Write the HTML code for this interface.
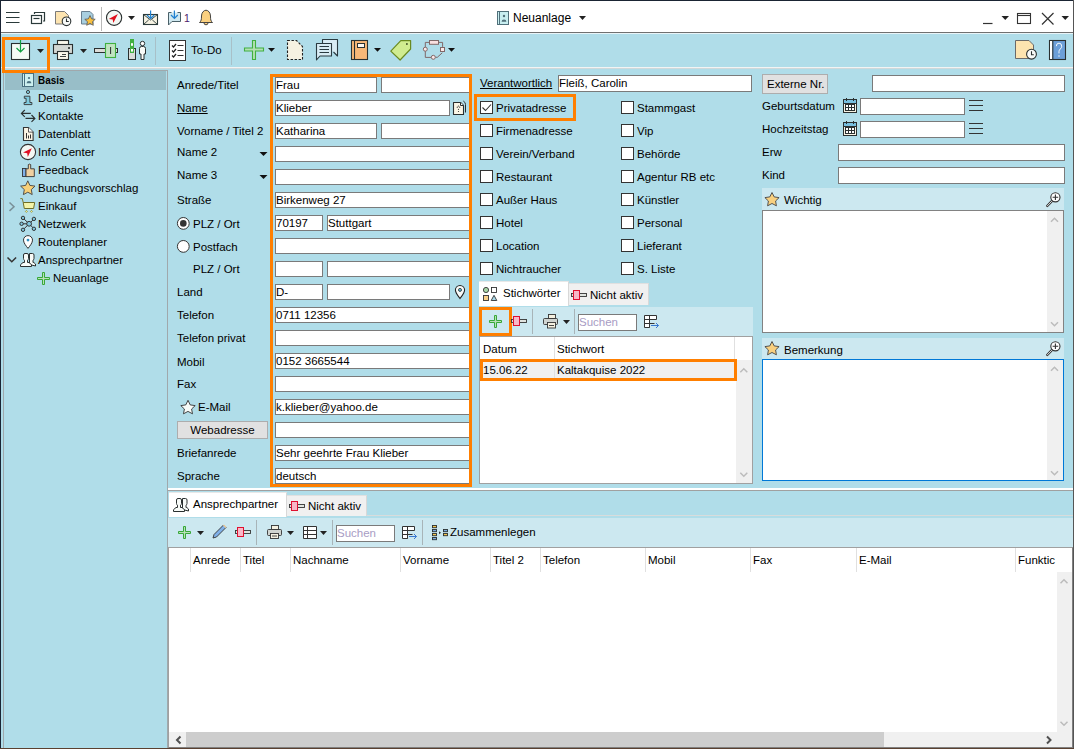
<!DOCTYPE html>
<html><head><meta charset="utf-8">
<style>
*{margin:0;padding:0;box-sizing:border-box}
html,body{width:1074px;height:749px;overflow:hidden;background:#b0dde9}
body{position:relative;font-family:"Liberation Sans",sans-serif;font-size:11.5px;color:#000}
.a{position:absolute}
.t{position:absolute;white-space:nowrap;line-height:16px;height:16px}
.in{position:absolute;background:#fff;border:1px solid #7a7a7a;height:16px}
.in span{position:absolute;left:0px;top:-1px;line-height:16px;white-space:nowrap}
.cb{position:absolute;width:13px;height:13px;border:1px solid #333;background:#fff}
svg{position:absolute;overflow:visible}
.u{text-decoration:underline}
</style></head><body>

<!-- window frame -->
<div class="a" style="left:0;top:0;width:1074px;height:32px;background:#fff"></div>
<div class="a" style="left:0;top:0;width:1074px;height:1px;background:#1a2433"></div>
<div class="a" style="left:0;top:0;width:1px;height:749px;background:#1a2433"></div>
<div class="a" style="left:1073px;top:0;width:1px;height:749px;background:#555"></div>
<div class="a" style="left:0;top:748px;width:1074px;height:1px;background:#5a4030"></div>
<div class="a" style="left:1px;top:32px;width:1072px;height:1px;background:#707070"></div>
<div class="a" style="left:1px;top:33px;width:1072px;height:1px;background:#e8f4f8"></div>


<!-- title bar icons -->
<svg style="left:0;top:0" width="1074" height="32">
 <g stroke="#2a3a3a" stroke-width="1.2" fill="none">
  <path d="M6 12.5h13.5M6 17.5h13.5M6 22.5h13.5"/>
  <path d="M34.5 14v-1.5h10v8.5h-1.5"/>
  <rect x="31.5" y="15.5" width="10" height="8"/>
  <path d="M33.5 18.5h6"/>
 </g>
 <!-- note clock -->
 <path d="M55.5 11.5h9l4 4v8.5h-13z" fill="#fde4b0" stroke="#7a7a7a"/>
 <circle cx="66.5" cy="21.3" r="4.3" fill="#f8faf8" stroke="#2a3030" stroke-width="1.1"/>
 <path d="M66.5 18.6v2.9h2.3" stroke="#2a3030" fill="none" stroke-width="1.1"/>
 <!-- star note -->
 <path d="M81.5 11.5h8.5l3 3v9.5h-11.5z" fill="#a8cfe0" stroke="#6a8090"/>
 <path d="M90 15.5l1.6 3.4 3.6.4-2.7 2.4.8 3.6-3.3-1.9-3.3 1.9.8-3.6-2.7-2.4 3.6-.4z" fill="#f8c040" stroke="#555" stroke-width=".8"/>
 <path d="M101.5 7v24" stroke="#b8b8b8"/>
 <!-- compass -->
 <circle cx="114.1" cy="17.8" r="7.6" fill="#f4f8f4" stroke="#2a3030" stroke-width="1.1"/>
 <path d="M117.9 14l-9.2 5.1 4 .4.6 3.4z" fill="#e0101c"/>
 <path d="M128 16h7l-3.5 4z" fill="#222"/>
 <!-- mail -->
 <rect x="143.5" y="14.5" width="14" height="10" fill="#f8f4e4" stroke="#2a3a3a" stroke-width="1.1"/>
 <path d="M143.5 14.5l7 5.5 7-5.5M143.5 24.5l5.2-4.6M157.5 24.5l-5.2-4.6" stroke="#2a3a3a" fill="none" stroke-width=".9"/>
 <path d="M150.6 10.5v8M147 15l3.6 3.6 3.6-3.6" stroke="#2080d0" fill="none" stroke-width="1.2"/>
 <!-- chat -->
 <path d="M171.5 12.5h-3v12.5l3.5-3.5h8.5v-9h-3" fill="#d0e8f0" stroke="#4a6068" stroke-width="1"/>
 <rect x="171.5" y="13" width="6" height="2" fill="#d0e8f0"/>
 <path d="M174.4 10.5v8M171 15l3.4 3.4 3.4-3.4" stroke="#2080d0" fill="none" stroke-width="1.2"/>
 <!-- bell -->
 <path d="M199.5 22.5c1.8-1.5 2-3 2-6.5 0-3.4 2.4-5.8 4.5-5.8s4.5 2.4 4.5 5.8c0 3.5.2 5 2 6.5z" fill="#fad080" stroke="#333" stroke-width=".9" stroke-linejoin="round"/>
 <path d="M204 23a2 1.8 0 0 0 4 0" fill="#fad080" stroke="#333" stroke-width=".9"/>
 <!-- window buttons -->
 <path d="M983 23.5h9.5" stroke="#333" stroke-width="1.2"/>
 <path d="M1001.5 16h7.5l-3.75 4z" fill="#222"/>
 <rect x="1017.5" y="13.5" width="13" height="10" fill="none" stroke="#333" stroke-width="1.1"/>
 <path d="M1018 15.5h12" stroke="#333" stroke-width="1.1"/>
 <path d="M1042 13l11.5 11.5M1053.5 13l-11.5 11.5" stroke="#333" stroke-width="1.2"/>
 <path d="M1061.5 16h7.5l-3.75 4z" fill="#222"/>
 <!-- title icon -->
 <rect x="497.5" y="11.5" width="11" height="13" fill="#c8eef0" stroke="#50707a"/>
 <path d="M499.5 11.5v13" stroke="#50707a"/>
 <circle cx="504" cy="16" r="1.2" fill="#50707a"/>
 <path d="M501.6 21.8a2.4 2.3 0 0 1 4.8 0z" fill="#50707a"/>
 <path d="M579 16h7l-3.5 4z" fill="#222"/>
</svg>
<span class="t" style="left:184px;top:10px;color:#4a1a6a;font-size:10.5px">1</span>
<span class="t" style="left:513px;top:10px;font-size:12px">Neuanlage</span>

<!-- toolbar -->
<div class="a" style="left:1px;top:67px;width:1072px;height:1px;background:#f2f4f4"></div>
<div class="a" style="left:1px;top:68px;width:1072px;height:1px;background:#d0d8da"></div>


<svg style="left:0;top:34px" width="1074" height="34">
 <!-- save icon: y offset 34 -->
 <rect x="11.5" y="9.5" width="18" height="16" fill="#f6fbf6" stroke="#2a2f2f" stroke-width="1.1"/>
 <path d="M20.5 6v12M16.5 14l4 4 4-4" stroke="#10a040" fill="none" stroke-width="1.2"/>
 <path d="M37 15h7l-3.5 4z" fill="#222"/>
 <!-- printer -->
 <rect x="57.5" y="6.5" width="11" height="5" fill="#faf8ec" stroke="#2a3030" stroke-width="1.1"/>
 <rect x="53.5" y="10.5" width="19" height="9" fill="#d4d8d4" stroke="#2a3030" stroke-width="1.1"/>
 <rect x="57.5" y="17.5" width="11" height="8" fill="#faf8ec" stroke="#2a3030" stroke-width="1.1"/>
 <circle cx="69" cy="14" r="1" fill="#1a2020"/>
 <path d="M62 20.5h4M60 22.5h6" stroke="#2a3030" stroke-width=".9"/>
 <path d="M80 15h7l-3.5 4z" fill="#222"/>
 <!-- plug -->
 <rect x="94.5" y="14.5" width="23" height="4" fill="#dcdcd8" stroke="#2a3030" stroke-width="1"/>
 <rect x="105.5" y="9.5" width="10" height="14" fill="#c0e4c0" stroke="#40b040" stroke-width="1.1"/>
 <path d="M110.6 13v7" stroke="#2a3030" stroke-width="1"/>
 <!-- person -->
 <rect x="128.5" y="14.5" width="7" height="11" fill="#d8dcd8" stroke="#2a3030" stroke-width="1"/>
 <rect x="130" y="5" width="4" height="14" fill="#40b040"/>
 <rect x="131" y="9.2" width="2" height="2.6" fill="#fff"/>
 <rect x="131" y="15" width="2" height="2.6" fill="#fff"/>
 <circle cx="142.5" cy="9.5" r="2.2" fill="#fff" stroke="#2a3030" stroke-width="1"/>
 <path d="M141 25.5v-5.5h-1.5v-5.5q0-2 2-2h2q2 0 2 2v5.5h-1.5v5.5z" fill="#f8fbf8" stroke="#2a3030" stroke-width="1" stroke-linejoin="round"/>
 <path d="M155.5 3v28" stroke="#a8c0c8"/>
 <!-- todo -->
 <rect x="169.5" y="6.5" width="16" height="20" fill="#fff" stroke="#333"/>
 <path d="M172 11.5l1.5 1.5 2.5-3M172 16.5l1.5 1.5 2.5-3M172 21.5l1.5 1.5 2.5-3" stroke="#222" fill="none" stroke-width="1.2"/>
 <path d="M177.5 11.5h6M177.5 16.5h6M177.5 21.5h6" stroke="#333"/>
 <path d="M231.5 3v28" stroke="#a8c0c8"/>
 <!-- plus -->
 <path d="M252.5 6.5h3v7.5h8v3h-8v8.5h-3v-8.5h-8v-3h8z" fill="#b4e0b4" stroke="#40b040" stroke-width="1.1"/>
 <path d="M268 14h7l-3.5 3.8z" fill="#111"/>
 <!-- dashed doc -->
 <path d="M287.5 6.5h9l6 6v13h-15z" fill="#f6f2e2" stroke="#222" stroke-width="1.1" stroke-dasharray="2.4 1.6"/>
 <!-- chat -->
 <path d="M322.5 9.5v-4h15v16.5l-4-4" fill="#d8ecf4" stroke="#2a3a40" stroke-width="1.1" stroke-linejoin="round"/>
 <path d="M316.5 9.5h15v12.5h-11.5l-3.5 3.8z" fill="#d8ecf4" stroke="#2a3a40" stroke-width="1.1" stroke-linejoin="round"/>
 <path d="M319.5 12.5h9.5M319.5 15.5h9.5M319.5 18.5h9.5" stroke="#2a3a40" stroke-width="1.1"/>
 <!-- book -->
 <rect x="351.5" y="6.5" width="16" height="19" fill="#f8b878" stroke="#2a3030" stroke-width="1.1"/>
 <path d="M354.5 6.5v19" stroke="#2a3030" stroke-width="1.1"/>
 <rect x="357.5" y="9.5" width="7" height="4" fill="#fff8f0" stroke="#2a3030" stroke-width="1"/>
 <path d="M374 14h7l-3.5 3.8z" fill="#111"/>
 <!-- tag -->
 <path d="M390.8 17.1l10-10.5h9.8v8.4l-10.5 11z" fill="#d0ec90" stroke="#6a8a20" stroke-width="1.2" stroke-linejoin="round"/>
 <circle cx="406.9" cy="10" r=".9" fill="#3a4a20"/>
 <!-- workflow -->
 <path d="M429.6 8.4h-4.3v15h6M435.3 23.3h2l5-4.5M438.7 8.4h3.9v4.5" stroke="#806868" fill="none" stroke-width="1"/>
 <rect x="429.5" y="6.5" width="9" height="3.8" fill="#fae0e0" stroke="#806868" stroke-width="1"/>
 <circle cx="425.3" cy="15.2" r="2" fill="#fae8e8" stroke="#806868" stroke-width="1"/>
 <rect x="440.5" y="13.5" width="4" height="4" fill="#fae8e8" stroke="#806868" stroke-width="1"/>
 <circle cx="433.3" cy="23.3" r="2" fill="#fae8e8" stroke="#806868" stroke-width="1"/>
 <path d="M448 14h7l-3.5 3.8z" fill="#111"/>
 <!-- right icons -->
 <path d="M1015.5 6.5h13.5l4.5 4.5v13.5h-18z" fill="#fde4b0" stroke="#6a6a6a" stroke-width="1"/>
 <circle cx="1031.5" cy="20.2" r="4.9" fill="#f8faf8" stroke="#2a3030" stroke-width="1.1"/>
 <path d="M1031.5 17.2v3.5h2.3" stroke="#2a3030" fill="none" stroke-width="1.1"/>
 <rect x="1049.5" y="6.5" width="16" height="19" fill="#6c9fd8" stroke="#2a3030" stroke-width="1.1"/>
 <rect x="1050" y="7" width="2.4" height="18" fill="#fff"/>
 <path d="M1052.8 6.5v19" stroke="#2a3030" stroke-width="1.1"/>
 <path d="M1056.3 12.2q0-3 2.7-3t2.7 3q0 1.6-1.4 2.8q-1.3 1-1.3 2.6v1.8" stroke="#fff" fill="none" stroke-width=".9"/>
 <circle cx="1059" cy="22" r=".7" fill="#fff"/>
</svg>
<span class="t" style="left:191px;top:42px">To-Do</span>
<!-- orange toolbar highlight -->


<!-- nav panel -->
<div class="a" style="left:3px;top:70px;width:165px;height:678px;border-left:1px solid #a0a8ac;border-top:1px solid #a0a8ac;border-right:1px solid #a0a8ac"></div>

<div class="a" style="left:5px;top:71px;width:161px;height:19px;background:#98bec8"></div>
<span class="t" style="left:38px;top:72px;font-weight:bold;transform:scaleX(.86);transform-origin:0 0">Basis</span>
<span class="t" style="left:38px;top:90px">Details</span>
<span class="t" style="left:38px;top:108px">Kontakte</span>
<span class="t" style="left:38px;top:126px">Datenblatt</span>
<span class="t" style="left:38px;top:144px">Info Center</span>
<span class="t" style="left:38px;top:162px">Feedback</span>
<span class="t" style="left:38px;top:180px">Buchungsvorschlag</span>
<span class="t" style="left:38px;top:198px">Einkauf</span>
<span class="t" style="left:38px;top:216px">Netzwerk</span>
<span class="t" style="left:38px;top:234px">Routenplaner</span>
<span class="t" style="left:38px;top:252px">Ansprechpartner</span>
<span class="t" style="left:53px;top:270px">Neuanlage</span>
<span class="t" style="left:177px;top:77px">Anrede/Titel</span>
<span class="t" style="left:177px;top:100px"><span class=u>Name</span></span>
<span class="t" style="left:177px;top:123px">Vorname / Titel 2</span>
<span class="t" style="left:177px;top:144px">Name 2</span>
<span class="t" style="left:177px;top:167px">Name 3</span>
<span class="t" style="left:177px;top:192px">Straße</span>
<span class="t" style="left:177px;top:284px">Land</span>
<span class="t" style="left:177px;top:307px">Telefon</span>
<span class="t" style="left:177px;top:330px">Telefon privat</span>
<span class="t" style="left:177px;top:354px">Mobil</span>
<span class="t" style="left:177px;top:376px">Fax</span>
<span class="t" style="left:177px;top:445px">Briefanrede</span>
<span class="t" style="left:177px;top:468px">Sprache</span>
<span class="t" style="left:193px;top:216px">PLZ / Ort</span>
<span class="t" style="left:193px;top:239px">Postfach</span>
<span class="t" style="left:193px;top:261px">PLZ / Ort</span>
<span class="t" style="left:198px;top:399px">E-Mail</span>
<div class="a" style="left:177px;top:421px;width:91px;height:18px;background:#e1e1e1;border:1px solid #adadad"></div>
<span class="t" style="left:177px;top:422px;width:91px;text-align:center">Webadresse</span>
<div class="in" style="left:275px;top:77px;width:102px"><span>Frau</span></div>
<div class="in" style="left:381px;top:77px;width:89px"></div>
<div class="in" style="left:275px;top:100px;width:175px"><span>Klieber</span></div>
<div class="in" style="left:275px;top:123px;width:102px"><span>Katharina</span></div>
<div class="in" style="left:381px;top:123px;width:89px"></div>
<div class="in" style="left:275px;top:146px;width:195px"></div>
<div class="in" style="left:275px;top:169px;width:195px"></div>
<div class="in" style="left:275px;top:192px;width:195px"><span>Birkenweg 27</span></div>
<div class="in" style="left:275px;top:215px;width:48px"><span>70197</span></div>
<div class="in" style="left:327px;top:215px;width:143px"><span>Stuttgart</span></div>
<div class="in" style="left:275px;top:238px;width:195px"></div>
<div class="in" style="left:275px;top:261px;width:48px"></div>
<div class="in" style="left:327px;top:261px;width:143px"></div>
<div class="in" style="left:275px;top:284px;width:48px"><span>D-</span></div>
<div class="in" style="left:327px;top:284px;width:123px"></div>
<div class="in" style="left:275px;top:307px;width:195px"><span>0711 12356</span></div>
<div class="in" style="left:275px;top:330px;width:195px"></div>
<div class="in" style="left:275px;top:353px;width:195px"><span>0152 3665544</span></div>
<div class="in" style="left:275px;top:376px;width:195px"></div>
<div class="in" style="left:275px;top:399px;width:195px"><span>k.klieber@yahoo.de</span></div>
<div class="in" style="left:275px;top:422px;width:195px"></div>
<div class="in" style="left:275px;top:445px;width:195px"><span>Sehr geehrte Frau Klieber</span></div>
<div class="in" style="left:275px;top:468px;width:195px"><span>deutsch</span></div>
<div class="a" style="left:270px;top:74px;width:202px;height:413px;border:3px solid #ff7f00"></div>
<span class="t u" style="left:480px;top:75px">Verantwortlich</span>
<div class="in" style="left:558px;top:75px;width:194px;height:17px"><span>Fleiß, Carolin</span></div>
<div class="cb" style="left:480px;top:101px"></div><span class="t" style="left:496px;top:100px">Privatadresse</span>
<div class="cb" style="left:621px;top:101px"></div><span class="t" style="left:637px;top:100px">Stammgast</span>
<div class="cb" style="left:480px;top:124px"></div><span class="t" style="left:496px;top:123px">Firmenadresse</span>
<div class="cb" style="left:621px;top:124px"></div><span class="t" style="left:637px;top:123px">Vip</span>
<div class="cb" style="left:480px;top:147px"></div><span class="t" style="left:496px;top:146px">Verein/Verband</span>
<div class="cb" style="left:621px;top:147px"></div><span class="t" style="left:637px;top:146px">Behörde</span>
<div class="cb" style="left:480px;top:170px"></div><span class="t" style="left:496px;top:169px">Restaurant</span>
<div class="cb" style="left:621px;top:170px"></div><span class="t" style="left:637px;top:169px">Agentur RB etc</span>
<div class="cb" style="left:480px;top:193px"></div><span class="t" style="left:496px;top:192px">Außer Haus</span>
<div class="cb" style="left:621px;top:193px"></div><span class="t" style="left:637px;top:192px">Künstler</span>
<div class="cb" style="left:480px;top:216px"></div><span class="t" style="left:496px;top:215px">Hotel</span>
<div class="cb" style="left:621px;top:216px"></div><span class="t" style="left:637px;top:215px">Personal</span>
<div class="cb" style="left:480px;top:239px"></div><span class="t" style="left:496px;top:238px">Location</span>
<div class="cb" style="left:621px;top:239px"></div><span class="t" style="left:637px;top:238px">Lieferant</span>
<div class="cb" style="left:480px;top:262px"></div><span class="t" style="left:496px;top:261px">Nichtraucher</span>
<div class="cb" style="left:621px;top:262px"></div><span class="t" style="left:637px;top:261px">S. Liste</span>
<svg style="left:480px;top:101px" width="13" height="13"><path d="M2.5 6.5l3 3 5.5-6" stroke="#333" fill="none" stroke-width="1.1"/></svg>
<div class="a" style="left:474px;top:94px;width:102px;height:27px;border:3px solid #ff7f00"></div>
<div class="a" style="left:762px;top:74px;width:66px;height:20px;background:#e1e1e1;border:1px solid #adadad"></div>
<span class="t" style="left:767px;top:76px">Externe Nr.</span>
<div class="in" style="left:872px;top:75px;width:193px;height:17px"></div>
<span class="t" style="left:762px;top:98px">Geburtsdatum</span>
<div class="in" style="left:860px;top:98px;width:105px;height:17px"></div>
<span class="t" style="left:762px;top:121px">Hochzeitstag</span>
<div class="in" style="left:860px;top:121px;width:105px;height:17px"></div>
<span class="t" style="left:762px;top:144px">Erw</span>
<div class="in" style="left:838px;top:144px;width:227px;height:17px"></div>
<span class="t" style="left:762px;top:167px">Kind</span>
<div class="in" style="left:838px;top:167px;width:227px;height:17px"></div>
<div class="a" style="left:762px;top:188px;width:302px;height:22px;background:#cce8f0"></div>
<span class="t" style="left:784px;top:192px">Wichtig</span>
<div class="a" style="left:762px;top:210px;width:302px;height:123px;background:#fff;border:1px solid #828282"></div>
<div class="a" style="left:1047px;top:211px;width:16px;height:121px;background:#f0f0f0"></div>
<div class="a" style="left:762px;top:338px;width:302px;height:21px;background:#cce8f0"></div>
<span class="t" style="left:784px;top:342px">Bemerkung</span>
<div class="a" style="left:762px;top:359px;width:302px;height:122px;background:#fff;border:1px solid #0078d7"></div>
<div class="a" style="left:1047px;top:360px;width:16px;height:120px;background:#f0f0f0"></div>
<div class="a" style="left:479px;top:281px;width:90px;height:25px;background:#fff;border-top:1px solid #e8e8e8;border-right:1px solid #d8d8d8"></div>
<span class="t" style="left:503px;top:285px">Stichwörter</span>
<div class="a" style="left:569px;top:283px;width:80px;height:22px;background:#f0f0f0;border-top:1px solid #e0e0e0;border-right:1px solid #d8d8d8"></div>
<span class="t" style="left:590px;top:287px">Nicht aktiv</span>
<div class="a" style="left:479px;top:307px;width:274px;height:30px;background:#cce8f0"></div>
<div class="a" style="left:479px;top:336px;width:274px;height:148px;background:#fff;border:1px solid #a0a0a0"></div>
<div class="a" style="left:736px;top:360px;width:16px;height:123px;background:#f0f0f0"></div>
<div class="a" style="left:554px;top:337px;width:1px;height:22px;background:#e0e0e0"></div>
<div class="a" style="left:734px;top:337px;width:1px;height:22px;background:#e0e0e0"></div>
<span class="t" style="left:483px;top:341px">Datum</span>
<span class="t" style="left:557px;top:341px">Stichwort</span>
<div class="a" style="left:480px;top:359px;width:256px;height:22px;background:#f0f0f0;border-bottom:1px solid #808080"></div>
<div class="a" style="left:554px;top:359px;width:1px;height:22px;background:#e0e0e0"></div>
<span class="t" style="left:483px;top:362px">15.06.22</span>
<span class="t" style="left:557px;top:362px">Kaltakquise 2022</span>
<div class="a" style="left:480px;top:359px;width:257px;height:22px;border:3px solid #ff7f00"></div>
<div class="a" style="left:578px;top:314px;width:59px;height:17px;background:#fff;border:1px solid #7a7a7a"></div>
<span class="t" style="left:579px;top:314px;color:#a89cc4">Suchen</span>
<div class="a" style="left:479px;top:307px;width:33px;height:29px;border:3px solid #ff7f00"></div>
<div class="a" style="left:168px;top:488px;width:905px;height:2px;background:#fff"></div>
<div class="a" style="left:168px;top:490px;width:905px;height:1px;background:#a0a0a0"></div>
<div class="a" style="left:367px;top:515px;width:706px;height:1px;background:#d8dcdc"></div><div class="a" style="left:169px;top:492px;width:118px;height:25px;background:#fff;border-top:1px solid #e8e8e8;border-right:1px solid #d8d8d8"></div>
<span class="t" style="left:193px;top:496px">Ansprechpartner</span>
<div class="a" style="left:287px;top:495px;width:80px;height:21px;background:#f0f0f0;border-top:1px solid #e0e0e0;border-right:1px solid #d8d8d8"></div>
<span class="t" style="left:308px;top:498px">Nicht aktiv</span>
<div class="a" style="left:168px;top:518px;width:905px;height:29px;background:#cce8f0"></div>
<div class="a" style="left:168px;top:547px;width:905px;height:201px;background:#fff;border-left:1px solid #a0a0a0;border-top:1px solid #a0a0a0;border-right:1px solid #808080;border-bottom:1px solid #808080"></div>
<div class="a" style="left:336px;top:525px;width:59px;height:17px;background:#fff;border:1px solid #7a7a7a"></div>
<span class="t" style="left:337px;top:525px;color:#a89cc4">Suchen</span>
<span class="t" style="left:450px;top:524px">Zusammenlegen</span>
<div class="a" style="left:190px;top:548px;width:1px;height:24px;background:#e0e0e0"></div>
<span class="t" style="left:193px;top:552px">Anrede</span>
<div class="a" style="left:240px;top:548px;width:1px;height:24px;background:#e0e0e0"></div>
<span class="t" style="left:243px;top:552px">Titel</span>
<div class="a" style="left:290px;top:548px;width:1px;height:24px;background:#e0e0e0"></div>
<span class="t" style="left:293px;top:552px">Nachname</span>
<div class="a" style="left:400px;top:548px;width:1px;height:24px;background:#e0e0e0"></div>
<span class="t" style="left:403px;top:552px">Vorname</span>
<div class="a" style="left:490px;top:548px;width:1px;height:24px;background:#e0e0e0"></div>
<span class="t" style="left:493px;top:552px">Titel 2</span>
<div class="a" style="left:540px;top:548px;width:1px;height:24px;background:#e0e0e0"></div>
<span class="t" style="left:543px;top:552px">Telefon</span>
<div class="a" style="left:645px;top:548px;width:1px;height:24px;background:#e0e0e0"></div>
<span class="t" style="left:648px;top:552px">Mobil</span>
<div class="a" style="left:750px;top:548px;width:1px;height:24px;background:#e0e0e0"></div>
<span class="t" style="left:753px;top:552px">Fax</span>
<div class="a" style="left:856px;top:548px;width:1px;height:24px;background:#e0e0e0"></div>
<span class="t" style="left:859px;top:552px">E-Mail</span>
<div class="a" style="left:1015px;top:548px;width:1px;height:24px;background:#e0e0e0"></div>
<span class="t" style="left:1018px;top:552px;width:38px;overflow:hidden">Funktic</span>
<div class="a" style="left:1057px;top:572px;width:15px;height:160px;background:#f0f0f0"></div>
<div class="a" style="left:169px;top:732px;width:903px;height:15px;background:#f0f0f0"></div>
<div class="a" style="left:186px;top:732px;width:698px;height:15px;background:#cdcdcd"></div>

<svg style="left:0;top:0" width="170" height="300">
 <!-- basis -->
 <rect x="22.5" y="73.5" width="11" height="13" fill="#cdf0f0" stroke="#4a7080"/>
 <path d="M24.5 73.5v13" stroke="#4a7080"/>
 <circle cx="29" cy="78" r="1.1" fill="#4a7080"/>
 <path d="M26.6 83.3a2.4 2.3 0 0 1 4.8 0z" fill="#4a7080"/>
 <!-- details i -->
 <circle cx="28" cy="92" r="1.6" fill="#80cce0" stroke="#333" stroke-width=".9"/>
 <path d="M24.3 96.2h5.6v6.3h2v2.1h-7.8v-2.1h2v-4.2h-1.8z" fill="#80cce0" stroke="#333" stroke-width=".9" stroke-linejoin="round"/>
 <!-- kontakte -->
 <path d="M21.3 113.4h9.5M24.8 110l-3.4 3.4 3.4 3.4M25.5 118.4h9.5M31.5 115l3.4 3.4-3.4 3.4" stroke="#2a3030" fill="none" stroke-width="1.15"/>
 <!-- datenblatt -->
 <path d="M23.5 127.5h5l4.6 4.6v8.4h-9.6z" fill="#faf4e4" stroke="#333" stroke-width="1.1"/>
 <path d="M28.5 127.5v4.6h4.6" fill="#fff" stroke="#333" stroke-width=".8"/>
 <path d="M26.5 133v5.5M28.5 135.5v3M30.5 134.5v4" stroke="#333" stroke-width="1"/>
 <!-- info center -->
 <circle cx="28" cy="152" r="7.6" fill="#f4f8f4" stroke="#333" stroke-width="1.1"/>
 <path d="M31.8 148.3l-8.8 4.3 4.2.6.6 3.7z" fill="#e01024"/>
 <!-- feedback -->
 <rect x="22.5" y="168.5" width="3.5" height="8" fill="#80b0e8" stroke="#333" stroke-width=".9"/>
 <path d="M26 168.8h2.3v-4.2q1.2-1 2.4 0v4.2h3.6v7.8h-8.3z" fill="#f0d0a0" stroke="#333" stroke-width=".9" stroke-linejoin="round"/>
 <!-- star -->
 <path d="M27.8 180.8l2.1 4.6 5.1.7-3.7 3.5.9 5-4.4-2.4-4.4 2.4.9-5-3.7-3.5 5.1-.7z" fill="#f8d078" stroke="#444" stroke-width=".9" stroke-linejoin="round"/>
 <!-- einkauf -->
 <path d="M9.5 202.5l4.5 4.2-4.5 4.2" stroke="#7a9098" fill="none" stroke-width="1.5"/>
 <path d="M20.3 198.6h2l.9 3.8" stroke="#7a7a30" fill="none" stroke-width="1"/>
 <path d="M23.2 202.5h11.5l-1.1 6h-9.3z" fill="#f4f4a8" stroke="#6e6e28" stroke-width="1"/>
 <path d="M26.4 210.4l1 1-1 1-1-1zM31.5 210.4l1 1-1 1-1-1z" fill="#f4f4a8" stroke="#8a8a30" stroke-width=".8"/>
 <!-- netzwerk -->
 <path d="M23 218l6.1 5.8L34 219M21.6 223.8h7.5M23 229.8l6.1-6L34 228.8" stroke="#333" stroke-width="1" fill="none"/>
 <circle cx="29.1" cy="223.8" r="2.4" fill="#80c8e0" stroke="#333" stroke-width="1"/>
 <circle cx="23" cy="217.9" r="1.7" fill="#80c8e0" stroke="#333" stroke-width="1"/>
 <circle cx="33.9" cy="218.9" r="1.7" fill="#80c8e0" stroke="#333" stroke-width="1"/>
 <circle cx="21.6" cy="223.8" r="1.7" fill="#80c8e0" stroke="#333" stroke-width="1"/>
 <circle cx="23" cy="229.8" r="1.7" fill="#80c8e0" stroke="#333" stroke-width="1"/>
 <circle cx="33.9" cy="228.8" r="1.7" fill="#80c8e0" stroke="#333" stroke-width="1"/>
 <!-- routenplaner -->
 <path d="M28 248.4c-2-2.6-4.5-5.5-4.5-8.3a4.5 4.5 0 0 1 9 0c0 2.8-2.5 5.7-4.5 8.3z" fill="#fff" stroke="#333" stroke-width="1"/>
 <circle cx="28" cy="240.1" r="1.4" fill="#3090c0"/>
 <!-- ansprechpartner -->
 <path d="M7.5 257.5l4.3 4.3 4.3-4.3" stroke="#333" fill="none" stroke-width="1.5"/>
 <g transform="translate(0 0)">
 <path d="M29.5 264.5V253.5h3q1.5 0 1.5 1.5v3.5q0 1.3-1 1.7v2.3h.8l1.7 1.5v2z" fill="#f8fbf8" stroke="#2a3030" stroke-width="1" stroke-linejoin="round"/>
 <path d="M24.5 260.2q-1-.4-1-1.7v-3.5q0-1.5 1.5-1.5h2q1.5 0 1.5 1.5v3.5q0 1.3-1 1.7v2.3h1.5l2.5 2.2v1.8h-11v-1.8l2.5-2.2h1.5z" fill="#f8fbf8" stroke="#2a3030" stroke-width="1" stroke-linejoin="round"/>
 </g>
 <!-- neuanlage plus -->
 <path d="M42.5 272.5h2v5h5v2h-5v5h-2v-5h-5v-2h5z" fill="#b8e0b8" stroke="#38a838" stroke-width="1"/>
</svg>


<svg style="left:0;top:0" width="1074" height="749">
 <!-- form arrows -->
 <path d="M259.5 152h8l-4 4z" fill="#111"/>
 <path d="M259.5 175h8l-4 4z" fill="#111"/>
 <!-- doc ? -->
 <path d="M453.5 102.5h7l3 3v9h-10z" fill="#faf6e6" stroke="#2a3030" stroke-width="1.1" stroke-linejoin="round"/>
 <path d="M460.5 102.5v3h3" fill="#fff" stroke="#2a3030" stroke-width="1"/>
 <path d="M463.3 101q2.2 1.2 2.2 3.5v8" stroke="#2a3030" fill="none" stroke-width="1"/>
 <circle cx="457.3" cy="107.2" r=".6" fill="#333"/><circle cx="458.5" cy="106" r=".6" fill="#333"/><circle cx="459.7" cy="107.2" r=".6" fill="#333"/><circle cx="458.5" cy="109.3" r=".6" fill="#333"/><circle cx="458.5" cy="111.5" r=".6" fill="#333"/>
 <!-- pin -->
 <path d="M460 298.5c-2.2-2.8-4.6-5.5-4.6-8.4a4.6 4.6 0 0 1 9.2 0c0 2.9-2.4 5.6-4.6 8.4z" fill="#f8faf8" stroke="#222" stroke-width="1.1"/>
 <circle cx="460" cy="289.9" r="1.5" fill="#60c8e8" stroke="#222" stroke-width=".8"/>
 <!-- radios -->
 <circle cx="183.3" cy="223.4" r="5.9" fill="#fff" stroke="#333" stroke-width="1"/>
 <circle cx="183.3" cy="223.4" r="3.3" fill="#333"/>
 <circle cx="183.3" cy="246.4" r="5.9" fill="#fff" stroke="#333" stroke-width="1"/>
 <!-- email star -->
 <path d="M188 400.3l2.2 4.6 5 .7-3.6 3.4.9 4.8-4.5-2.4-4.5 2.4.9-4.8-3.6-3.4 5-.7z" fill="#f8fbf8" stroke="#333" stroke-width=".9" stroke-linejoin="round"/>
 <!-- stichwoerter tab icon -->
 <circle cx="486" cy="290" r="2.6" fill="#a8d8a8" stroke="#333" stroke-width=".9"/>
 <rect x="491.5" y="287.5" width="5" height="5" fill="#fff" stroke="#333" stroke-width=".9"/>
 <rect x="483.5" y="295.5" width="5" height="5" fill="#f8d088" stroke="#333" stroke-width=".9"/>
 <path d="M494 295.3l2.8 5.2h-5.6z" fill="#a8d8e8" stroke="#333" stroke-width=".9" stroke-linejoin="round"/>
 <!-- plug in tab (stichw) -->
 <rect x="571.5" y="293.5" width="15" height="3" fill="#e0e4e0" stroke="#333" stroke-width=".9"/>
 <rect x="573.5" y="290.5" width="6" height="9" fill="#f8b8c8" stroke="#e01030" stroke-width="1"/>
 <!-- stichw toolbar plus -->
 <path d="M494.5 315.5h2v5h5v2h-5v5h-2v-5h-5v-2h5z" fill="#b8e0b8" stroke="#38a838" stroke-width="1"/>
 <!-- plug toolbar -->
 <rect x="511.5" y="319.5" width="15" height="3" fill="#e0e4e0" stroke="#333" stroke-width=".9"/>
 <rect x="513.5" y="316.5" width="6" height="9" fill="#f8b8c8" stroke="#e01030" stroke-width="1"/>
 <path d="M532.5 309v25M574.5 309v25" stroke="#a8b4b8"/>
 <!-- printer small -->
 <rect x="548.5" y="314.5" width="7" height="4" fill="#f4f0e0" stroke="#333" stroke-width=".9"/>
 <rect x="543.5" y="318.5" width="14" height="6" rx="1" fill="#d0d4d0" stroke="#333" stroke-width=".9"/>
 <rect x="547.5" y="322.5" width="8" height="5.5" fill="#f4f0e0" stroke="#333" stroke-width=".9"/>
 <path d="M549 325.5h5" stroke="#333" stroke-width=".9"/>
 <path d="M563 320h7l-3.5 4z" fill="#222"/>
 <!-- export grid -->
 <path d="M644.5 315.5h12v4h-7v8h-5z M644.5 319.5h5M644.5 323.5h5M649.5 315.5v12M649.5 323.5h5" fill="#fff" stroke="#333" stroke-width="1"/>
 <path d="M651 325.5h7.5M656 323l2.5 2.5-2.5 2.5" stroke="#3878d0" fill="none" stroke-width="1"/>
 <!-- scroll arrows list -->
<path d="M740.3 372.3l3.5-3.5 3.5 3.5M740.3 472.7l3.5 3.5 3.5-3.5" stroke="#bcbcbc" fill="none" stroke-width="1.5"/>

 <!-- calendars -->
 <g id="cal">
 <rect x="843.5" y="99.5" width="13" height="13" fill="#f8f4e4" stroke="#2a3030" stroke-width="1"/>
 <rect x="844" y="100" width="12" height="3.5" fill="#78c0e0"/>
 <path d="M843.5 103.5h13M846.5 98v3M853.5 98v3" stroke="#2a3030" stroke-width="1"/>
 <rect x="845" y="104" width="10" height="7" fill="#2a3030"/>
 <path d="M846 105h2v2h-2zM849 105h2v2h-2zM852 105h2v2h-2zM846 108h2v2h-2zM849 108h2v2h-2zM852 108h2v2h-2z" fill="#fff"/>
 </g>
 <use href="#cal" y="23"/>
 <path d="M969 100.5h14M969 105.5h14M969 110.5h14M969 123.5h14M969 128.5h14M969 133.5h14" stroke="#333" stroke-width="1"/>
 <!-- wichtig/bemerkung stars + zoom -->
 <g id="star2">
 <path d="M772 192.5l2.2 4.4 4.9.7-3.5 3.4.8 4.8-4.4-2.3-4.4 2.3.8-4.8-3.5-3.4 4.9-.7z" fill="#f8d080" stroke="#444" stroke-width=".9" stroke-linejoin="round"/>
 <circle cx="1055.4" cy="197.3" r="4.6" fill="#fff" stroke="#333" stroke-width="1.1"/>
 <path d="M1055.4 194.5v5.6M1052.6 197.3h5.6" stroke="#333" stroke-width="1.1"/>
 <path d="M1047.2 206l4.4-4.6" stroke="#333" stroke-width="2.4" stroke-linecap="round"/>
 <path d="M1047.2 206l4.4-4.6" stroke="#ddd" stroke-width="1" stroke-linecap="round"/>
<path d="M1051.0 221.8l3.5-3.5 3.5 3.5M1051.0 322.2l3.5 3.5 3.5-3.5" stroke="#bcbcbc" fill="none" stroke-width="1.5"/>
 </g>
 <use href="#star2" y="149"/>
 <!-- bottom tab person -->
 <g transform="translate(153 245)">
 <path d="M29.5 264.5V253.5h3q1.5 0 1.5 1.5v3.5q0 1.3-1 1.7v2.3h.8l1.7 1.5v2z" fill="#f8fbf8" stroke="#2a3030" stroke-width="1" stroke-linejoin="round"/>
 <path d="M24.5 260.2q-1-.4-1-1.7v-3.5q0-1.5 1.5-1.5h2q1.5 0 1.5 1.5v3.5q0 1.3-1 1.7v2.3h1.5l2.5 2.2v1.8h-11v-1.8l2.5-2.2h1.5z" fill="#f8fbf8" stroke="#2a3030" stroke-width="1" stroke-linejoin="round"/>
 </g>
 <!-- bottom tab plug -->
 <rect x="289.5" y="504.5" width="15" height="3" fill="#e0e4e0" stroke="#333" stroke-width=".9"/>
 <rect x="291.5" y="501.5" width="6" height="9" fill="#f8b8c8" stroke="#e01030" stroke-width="1"/>
 <!-- bottom toolbar -->
 <path d="M183.5 526.5h2v5h5v2h-5v5h-2v-5h-5v-2h5z" fill="#b8e0b8" stroke="#38a838" stroke-width="1"/>
 <path d="M197 531h7l-3.5 4z" fill="#222"/>
 <path d="M213 538l1-3.5 9.5-9.5 2.5 2.5-9.5 9.5z" fill="#80b0e8" stroke="#333" stroke-width=".9" stroke-linejoin="round"/>
 <path d="M223.5 525l2.5 2.5" stroke="#f0d0a0" stroke-width="1.5"/>
 <rect x="235.5" y="530.5" width="15" height="3" fill="#e0e4e0" stroke="#333" stroke-width=".9"/>
 <rect x="237.5" y="527.5" width="6" height="9" fill="#f8b8c8" stroke="#e01030" stroke-width="1"/>
 <path d="M256.5 520v25M332.5 520v25M422.5 520v25" stroke="#a8b4b8"/>
 <rect x="271.5" y="525.5" width="7" height="4" fill="#f4f0e0" stroke="#333" stroke-width=".9"/>
 <rect x="267.5" y="529.5" width="14" height="6" rx="1" fill="#d0d4d0" stroke="#333" stroke-width=".9"/>
 <rect x="270.5" y="533.5" width="8" height="5" fill="#f4f0e0" stroke="#333" stroke-width=".9"/>
 <path d="M272 536h5" stroke="#333" stroke-width=".9"/>
 <path d="M287 531h7l-3.5 4z" fill="#222"/>
 <path d="M303.5 526.5h13v12h-13zM303.5 530.5h13M303.5 534.5h13M307.5 526.5v12" fill="#fff" stroke="#333" stroke-width="1"/>
 <path d="M320 531h7l-3.5 4z" fill="#222"/>
 <path d="M402.5 526.5h12v4h-7v8h-5z M402.5 530.5h5M402.5 534.5h5M407.5 526.5v12M407.5 534.5h5" fill="#fff" stroke="#333" stroke-width="1"/>
 <path d="M409 536.5h7.5M414 534l2.5 2.5-2.5 2.5" stroke="#3878d0" fill="none" stroke-width="1"/>
 <rect x="432.5" y="525.5" width="4" height="2.2" fill="#f8c850" stroke="#2a3030" stroke-width=".9"/>
 <rect x="432.5" y="529.5" width="4" height="2.2" fill="#78a8e0" stroke="#2a3030" stroke-width=".9"/>
 <rect x="432.5" y="533.5" width="4" height="2.2" fill="#f8c850" stroke="#2a3030" stroke-width=".9"/>
 <rect x="432.5" y="537.5" width="4" height="2.2" fill="#78a8e0" stroke="#2a3030" stroke-width=".9"/>
 <path d="M439 531.3l2 1.5-2 1.5z" fill="#333"/>
 <rect x="443.5" y="529.5" width="4" height="2.2" fill="#78a8e0" stroke="#2a3030" stroke-width=".9"/>
 <rect x="443.5" y="533.5" width="4" height="2.2" fill="#f8c850" stroke="#2a3030" stroke-width=".9"/>
 <!-- bottom grid scroll arrows -->
<path d="M1060.5 583.3l3.5-3.5 3.5 3.5M1060.5 721.7l3.5 3.5 3.5-3.5" stroke="#bcbcbc" fill="none" stroke-width="1.5"/>
 <path d="M180.5 736.5l-3.5 3.5 3.5 3.5M1047 736.5l3.5 3.5-3.5 3.5" stroke="#505050" fill="none" stroke-width="2"/>
</svg>

<div class="a" style="left:2px;top:37px;width:48px;height:36px;border:3px solid #ff7f00"></div>
</body></html>
